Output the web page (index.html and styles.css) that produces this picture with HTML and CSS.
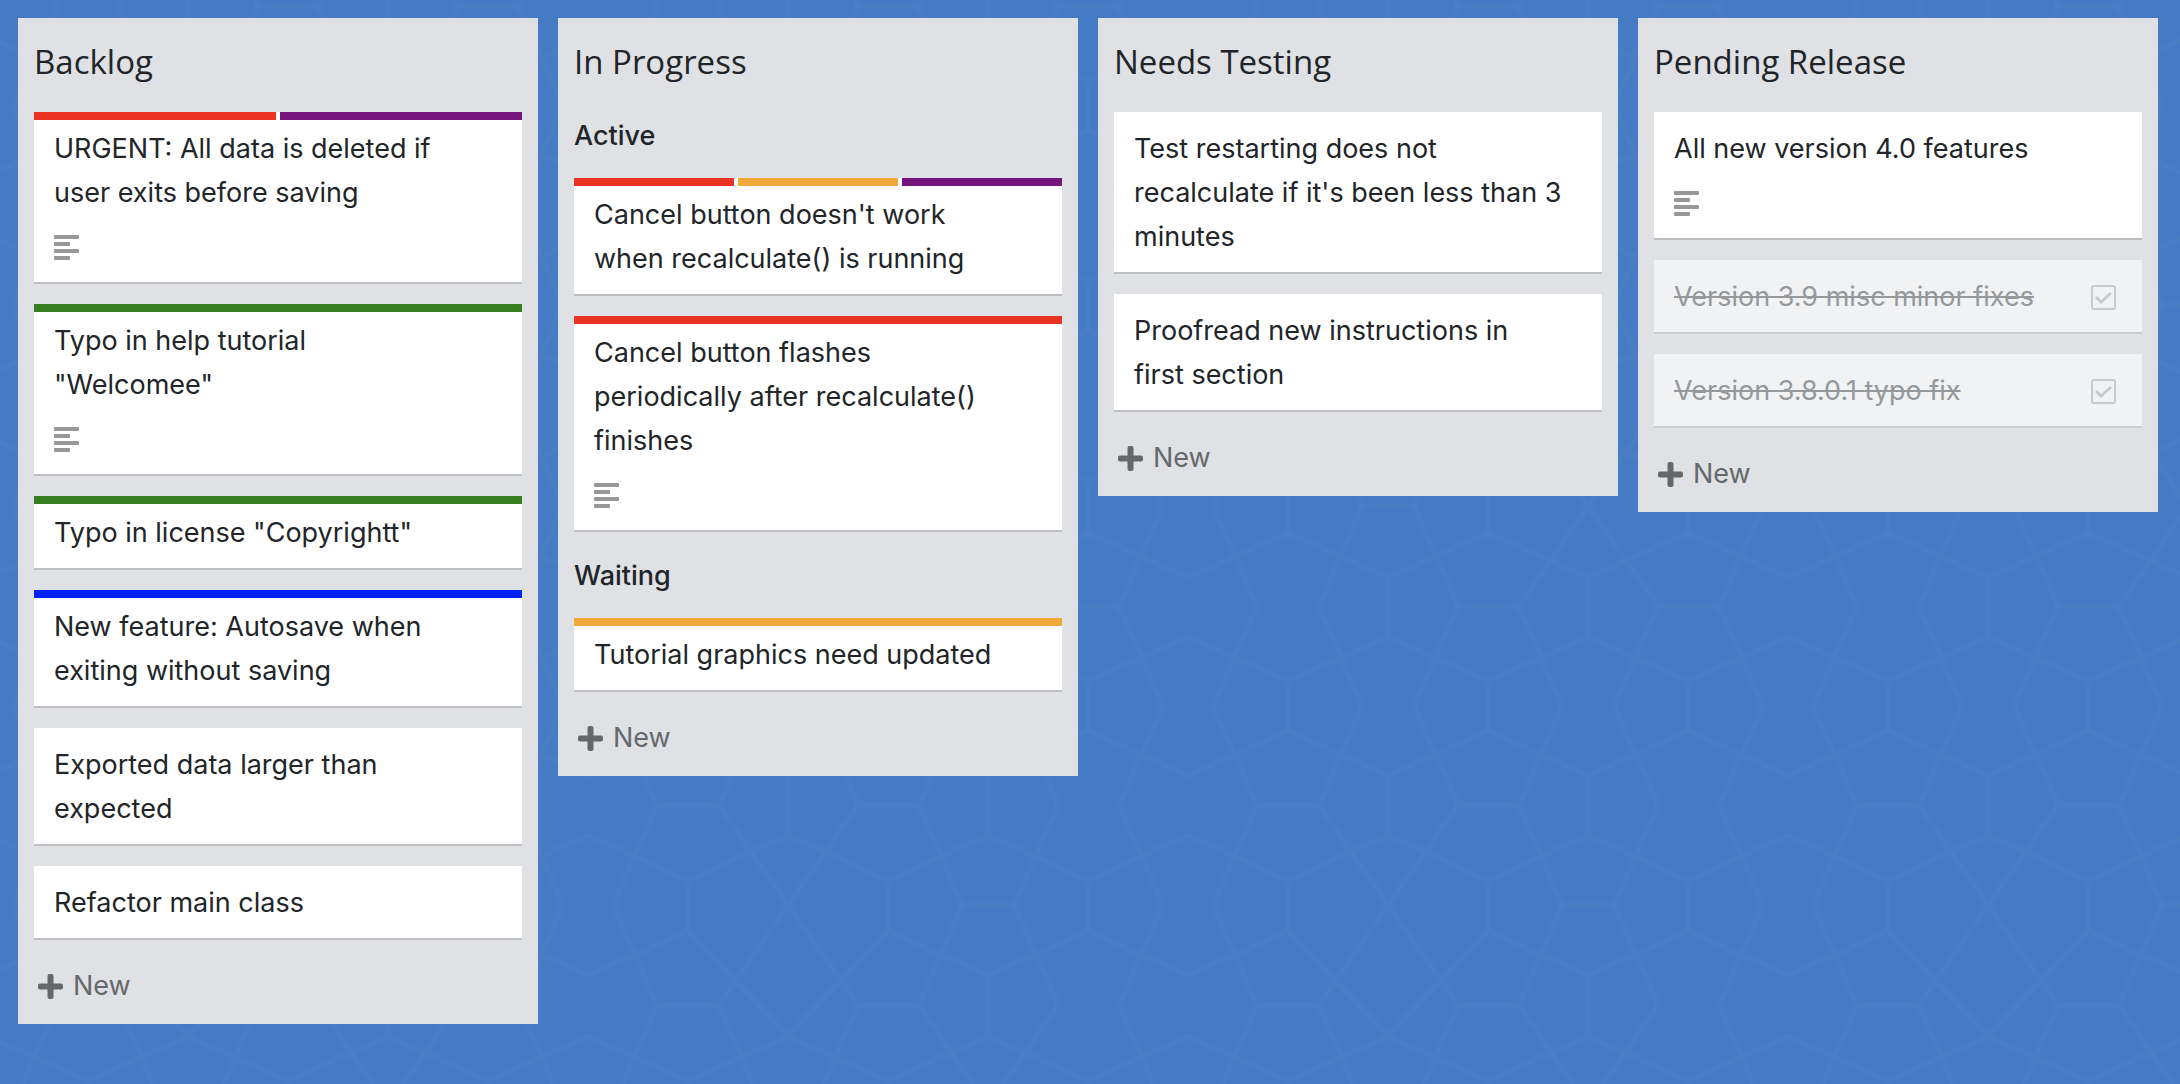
FILE: index.html
```html
<!DOCTYPE html>
<html lang="en">
    <head>
        <meta charset="utf-8">
        <title>Board</title>
        <link rel="stylesheet" href="styles.css">
    </head>
    <body>
        <svg class="sprite" aria-hidden="true">
            <symbol id="notes" viewBox="0 0 25 25">
                <rect width="25" height="4" rx="1"/>
                <rect y="7" width="16" height="4" rx="1"/>
                <rect y="14" width="25" height="4" rx="1"/>
                <rect y="21" width="16" height="4" rx="1"/>
            </symbol>
            <symbol id="plus" viewBox="0 0 25 25">
                <rect y="9.5" width="25" height="6" rx="2"/>
                <rect x="9.5" width="6" height="25" rx="2"/>
            </symbol>
        </svg>
        <main class="board">
            <section class="column">
                <h2 class="title">Backlog</h2>
                <article class="card">
                    <div class="labels"><span class="red"></span><span class="purple"></span></div>
                    <p>URGENT: All data is deleted if<br>user exits before saving</p>
                    <div class="meta"><svg class="icon"><use href="#notes"/></svg></div>
                </article>
                <article class="card">
                    <div class="labels"><span class="green"></span></div>
                    <p>Typo in help tutorial<br>"Welcomee"</p>
                    <div class="meta"><svg class="icon"><use href="#notes"/></svg></div>
                </article>
                <article class="card">
                    <div class="labels"><span class="green"></span></div>
                    <p>Typo in license "Copyrightt"</p>
                </article>
                <article class="card">
                    <div class="labels"><span class="blue"></span></div>
                    <p>New feature: Autosave when exiting without saving</p>
                </article>
                <article class="card">
                    <p>Exported data larger than expected</p>
                </article>
                <article class="card">
                    <p>Refactor main class</p>
                </article>
                <button class="new" type="button"><svg class="icon"><use href="#plus"/></svg>New</button>
            </section>

            <section class="column">
                <h2 class="title">In Progress</h2>
                <h3 class="group">Active</h3>
                <article class="card">
                    <div class="labels"><span class="red"></span><span class="orange"></span><span class="purple"></span></div>
                    <p>Cancel button doesn't work<br>when recalculate() is running</p>
                </article>
                <article class="card">
                    <div class="labels"><span class="red"></span></div>
                    <p>Cancel button flashes<br>periodically after recalculate()<br>finishes</p>
                    <div class="meta"><svg class="icon"><use href="#notes"/></svg></div>
                </article>
                <h3 class="group">Waiting</h3>
                <article class="card">
                    <div class="labels"><span class="orange"></span></div>
                    <p>Tutorial graphics need updated</p>
                </article>
                <button class="new" type="button"><svg class="icon"><use href="#plus"/></svg>New</button>
            </section>

            <section class="column">
                <h2 class="title">Needs Testing</h2>
                <article class="card">
                    <p>Test restarting does not recalculate if it's been less than 3 minutes</p>
                </article>
                <article class="card">
                    <p>Proofread new instructions in<br>first section</p>
                </article>
                <button class="new" type="button"><svg class="icon"><use href="#plus"/></svg>New</button>
            </section>

            <section class="column">
                <h2 class="title">Pending Release</h2>
                <article class="card">
                    <p>All new version 4.0 features</p>
                    <div class="meta"><svg class="icon"><use href="#notes"/></svg></div>
                </article>
                <article class="card done">
                    <label for="v39">Version 3.9 misc minor fixes</label>
                    <input class="check" type="checkbox" id="v39" checked>
                </article>
                <article class="card done">
                    <label for="v3801">Version 3.8.0.1 typo fix</label>
                    <input class="check" type="checkbox" id="v3801" checked>
                </article>
                <button class="new" type="button"><svg class="icon"><use href="#plus"/></svg>New</button>
            </section>
        </main>
    </body>
</html>
```
FILE: styles.css
```css
* {
    box-sizing: border-box;
}
body {
    margin: 0;
    min-height: 100vh;
    color: #212529;
    font: 27px/44px Inter, "Liberation Sans", sans-serif;
    background-color: #457bc4;
    background-position: 488px -94px;
    background-image: url("data:image/svg+xml,%3Csvg xmlns='http://www.w3.org/2000/svg' width='600' height='600'%3E%3Cg fill='none' stroke='%23fff' stroke-opacity='.025' stroke-width='5' stroke-linejoin='round'%3E%3Cpath d='M0 27L100 71L200 27L300 71L400 27L500 71L600 27M0 175L100 131L200 175L300 131L400 175L500 131L600 175M0 224L100 270L200 224L300 270L400 224L500 270L600 224M0 375L100 329L200 375L300 329L400 375L500 329L600 375M0 425L100 469L200 425L300 530L400 425L500 469L600 425M0 575L100 530L200 575L300 530L400 575L500 530L600 575M0 0V27M200 0V27M400 0V27M600 0V27M300 71V131M500 71V131M0 175V224M200 175V224M400 175V224M600 175V224M300 270V329M500 270V329M0 375V425M200 375V425M400 375V425M600 375V425M500 469V530M0 575V600M200 575V600M400 575V600M600 575V600M75 0L31 100L75 200L31 299L75 399L31 499L75 600M125 0L169 100L125 200L169 299L125 399L169 499L125 600M274 0L231 100L274 200L231 299L300 399L370 499L326 600M326 0L370 100L326 200L370 299L300 399L231 499L274 600M500 0L431 100L474 200L431 299L474 399L431 499L500 600M500 0L570 100L526 200L570 299L526 399L570 499L500 600M274 0H326M274 600H326M370 100H431M570 100H600M0 100H31M169 299H231M370 299H431M474 399H526M169 499H231M370 499H431'/%3E%3C/g%3E%3C/svg%3E");
}
h2, h3, p {
    margin: 0;
}
.sprite {
    display: none;
}
.board {
    display: grid;
    grid-template-columns: repeat(4, 1fr);
    align-items: start;
    gap: 20px;
    padding: 18px 22px 18px 18px;
}
.column {
    display: flex;
    flex-direction: column;
    gap: 20px;
    padding: 16px;
    background-color: #dfe1e5;
}
.title {
    padding-bottom: 2px;
    font: 400 33px/56px "Open Sans", "Noto Sans", sans-serif;
}
.group {
    padding-top: 2px;
    font-size: 27px;
    font-weight: 500;
}
.card {
    position: relative;
    padding: 15px 26px 13px 20px;
    background-color: #fff;
    border-bottom: 2px solid #bcbebf;
}

/* coloured strips over the top edge */
.labels {
    position: absolute;
    top: 0;
    left: 0;
    right: 0;
    display: flex;
    gap: 4px;
    height: 8px;
}
.labels span {
    flex: 1;
}
.red { background-color: #eb3323; }
.purple { background-color: #75147c; }
.orange { background-color: #f2a93b; }
.green { background-color: #377e22; }
.blue { background-color: #0022f5; }

.icon {
    width: 25px;
    height: 25px;
    fill: currentColor;
}
.meta {
    display: flex;
    align-items: center;
    height: 44px;
    margin-top: 10px;
    color: #969798;
}
.new {
    display: flex;
    align-items: center;
    gap: 10px;
    padding: 4px 4px 0;
    border: 0;
    background: none;
    color: #65686b;
    font: inherit;
    cursor: pointer;
}

.done {
    display: flex;
    justify-content: space-between;
    align-items: center;
    background-color: #f1f2f4;
    border-color: #cacccf;
    color: #96999b;
    text-decoration: line-through;
}
.check {
    appearance: none;
    width: 25px;
    height: 25px;
    margin: 0;
    background: url("data:image/svg+xml,%3Csvg xmlns='http://www.w3.org/2000/svg' viewBox='0 0 25 25' fill='none' stroke='%23c9cacc'%3E%3Crect x='1' y='1' width='23' height='23' rx='2' stroke-width='2'/%3E%3Cpath d='M5 12L10 17L20 8' stroke-width='3'/%3E%3C/svg%3E");
}
```
